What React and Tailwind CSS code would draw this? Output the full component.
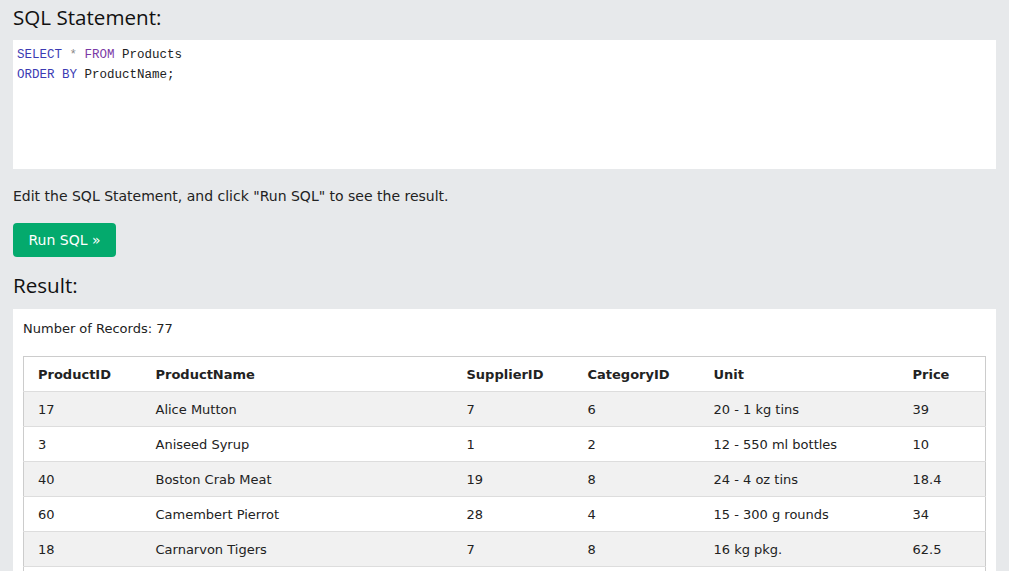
import React from 'react';

const rows = [
  ['17', 'Alice Mutton', '7', '6', '20 - 1 kg tins', '39'],
  ['3', 'Aniseed Syrup', '1', '2', '12 - 550 ml bottles', '10'],
  ['40', 'Boston Crab Meat', '19', '8', '24 - 4 oz tins', '18.4'],
  ['60', 'Camembert Pierrot', '28', '4', '15 - 300 g rounds', '34'],
  ['18', 'Carnarvon Tigers', '7', '8', '16 kg pkg.', '62.5'],
  ['1', 'Chai', '1', '1', '10 boxes x 20 bags', '18'],
];

const cols = ['ProductID', 'ProductName', 'SupplierID', 'CategoryID', 'Unit', 'Price'];
const widths = ['w-[118px]', 'w-[311px]', 'w-[121px]', 'w-[126px]', 'w-[199px]', ''];

export default function App() {
  return (
    <div className="min-h-screen bg-[#e7e9eb] pl-[13px] pr-[13px] text-[#000]" style={{ fontFamily: 'Verdana, "DejaVu Sans", sans-serif' }}>
      <h3 className="h-[40px] pt-[4px] text-[20.6px] leading-[26px] text-[#111]" style={{ fontFamily: '"Segoe UI", "Open Sans", sans-serif' }}>SQL Statement:</h3>

      <div className="h-[129px] bg-white pl-[4px] pt-[5px] text-[12.5px] leading-[20px] text-[#222]" style={{ fontFamily: 'Consolas, "Liberation Mono", monospace' }}>
        <div>
          <span className="text-[#3b3bb3]">SELECT</span> <span className="text-[#888]">*</span> <span className="text-[#7b3aa6]">FROM</span> Products
        </div>
        <div>
          <span className="text-[#3b3bb3]">ORDER BY</span> ProductName;
        </div>
      </div>

      <p className="mt-[17px] text-[14px] leading-[20px] text-[#222]">Edit the SQL Statement, and click "Run SQL" to see the result.</p>

      <button className="mt-[17px] flex h-[34px] w-[103px] items-center justify-center rounded-[4px] bg-[#04aa6d] text-[14px] text-white">
        Run SQL »
      </button>

      <h3 className="mt-[15px] text-[20.6px] leading-[26px] text-[#111]" style={{ fontFamily: '"Segoe UI", "Open Sans", sans-serif' }}>Result:</h3>

      <div className="mt-[11px] bg-white px-[10px] pt-[10px] pb-[10px]">
        <div className="text-[13px] leading-[20px] text-[#222]">Number of Records: 77</div>
        <table className="mt-[17px] w-full table-fixed border-collapse border border-[#cccccc] text-[13px] text-[#222]">
          <thead>
            <tr className="h-[35px] border-b border-[#dddddd] bg-white">
              {cols.map((c, i) => (
                <th key={c} className={`${widths[i]} pl-[14px] pt-[2px] text-left font-bold`}>{c}</th>
              ))}
            </tr>
          </thead>
          <tbody>
            {rows.map((r, ri) => (
              <tr key={ri} className={`h-[35px] border-b border-[#dddddd] ${ri % 2 === 0 ? 'bg-[#f1f1f1]' : 'bg-white'}`}>
                {r.map((v, ci) => (
                  <td key={ci} className="pl-[14px] pt-[2px]">{v}</td>
                ))}
              </tr>
            ))}
          </tbody>
        </table>
      </div>
    </div>
  );
}
